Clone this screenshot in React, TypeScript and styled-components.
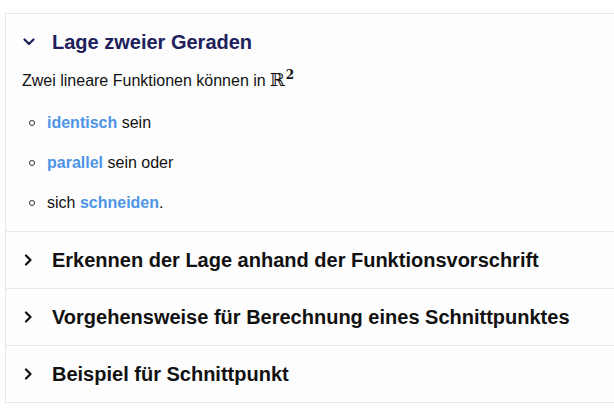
import React from "react";
import styled, { createGlobalStyle } from "styled-components";

const Global = createGlobalStyle`
  html, body { margin: 0; padding: 0; background: #ffffff; overflow: hidden; }
  body { font-family: "Liberation Sans", Arial, sans-serif; }
`;

const Page = styled.div`
  padding: 13px 0 0 5px;
  overflow: hidden;
`;

const Accordion = styled.div`
  width: calc(100% + 4px);
  border: 1px solid #e8e8e8;
  border-bottom: none;
  background: #fdfdfd;
`;

const Section = styled.section`
  border-bottom: 1px solid #e8e8e8;
`;

const Header = styled.div<{ $open?: boolean }>`
  height: 56px;
  display: flex;
  align-items: center;
  padding-left: 17px;
  color: ${(p) => (p.$open ? "#20205c" : "#111111")};
  cursor: pointer;
`;

const IconBox = styled.span`
  width: 29px;
  height: 20px;
  display: flex;
  align-items: center;
  flex-shrink: 0;
`;

const Title = styled.h3`
  margin: 0;
  font-size: 20px;
  font-weight: 700;
  line-height: 24px;
  letter-spacing: 0;
`;

const Body = styled.div`
  padding: 0 0 18px 16px;
  color: #111111;
  font-size: 16px;
`;

const Para = styled.p`
  margin: 0;
  line-height: 20px;
`;

const Math = styled.span`
  font-family: "DejaVu Serif", "Liberation Serif", serif;
  font-size: 18px;
  margin-left: 4px;
`;

const Sup = styled.sup`
  font-family: "DejaVu Serif", "Liberation Serif", serif;
  font-size: 12px;
  font-weight: 700;
  vertical-align: 7px;
  line-height: 0;
  margin-left: 1px;
`;

const List = styled.ul`
  list-style: none;
  margin: 22px 0 0 0;
  padding: 0 0 0 7px;
`;

const Item = styled.li`
  display: flex;
  align-items: center;
  line-height: 20px;
  & + & {
    margin-top: 20px;
  }
  &::before {
    content: "";
    width: 4px;
    height: 4px;
    border: 1.3px solid #333;
    border-radius: 50%;
    margin-right: 12px;
    flex-shrink: 0;
  }
`;

const Term = styled.strong`
  color: #4e94e6;
  font-weight: 700;
`;

const Down = () => (
  <svg width="12" height="8" viewBox="0 0 12 8">
    <path d="M1.5 1.5 L6 6 L10.5 1.5" fill="none" stroke="currentColor" strokeWidth="2.2" strokeLinecap="round" strokeLinejoin="round" />
  </svg>
);

const Right = () => (
  <svg width="9" height="12" viewBox="0 0 9 12" style={{ marginLeft: 1 }}>
    <path d="M2 1.5 L6.5 6 L2 10.5" fill="none" stroke="currentColor" strokeWidth="2.2" strokeLinecap="round" strokeLinejoin="round" />
  </svg>
);

const collapsed = [
  "Erkennen der Lage anhand der Funktionsvorschrift",
  "Vorgehensweise für Berechnung eines Schnittpunktes",
  "Beispiel für Schnittpunkt",
];

export default function App() {
  return (
    <>
      <Global />
      <Page>
        <Accordion>
          <Section>
            <Header $open>
              <IconBox>
                <Down />
              </IconBox>
              <Title>Lage zweier Geraden</Title>
            </Header>
            <Body>
              <Para>
                Zwei lineare Funktionen können in<Math>ℝ</Math>
                <Sup>2</Sup>
              </Para>
              <List>
                <Item>
                  <span>
                    <Term>identisch</Term> sein
                  </span>
                </Item>
                <Item>
                  <span>
                    <Term>parallel</Term> sein oder
                  </span>
                </Item>
                <Item>
                  <span>
                    sich <Term>schneiden</Term>.
                  </span>
                </Item>
              </List>
            </Body>
          </Section>
          {collapsed.map((t) => (
            <Section key={t}>
              <Header>
                <IconBox>
                  <Right />
                </IconBox>
                <Title>{t}</Title>
              </Header>
            </Section>
          ))}
        </Accordion>
      </Page>
    </>
  );
}
